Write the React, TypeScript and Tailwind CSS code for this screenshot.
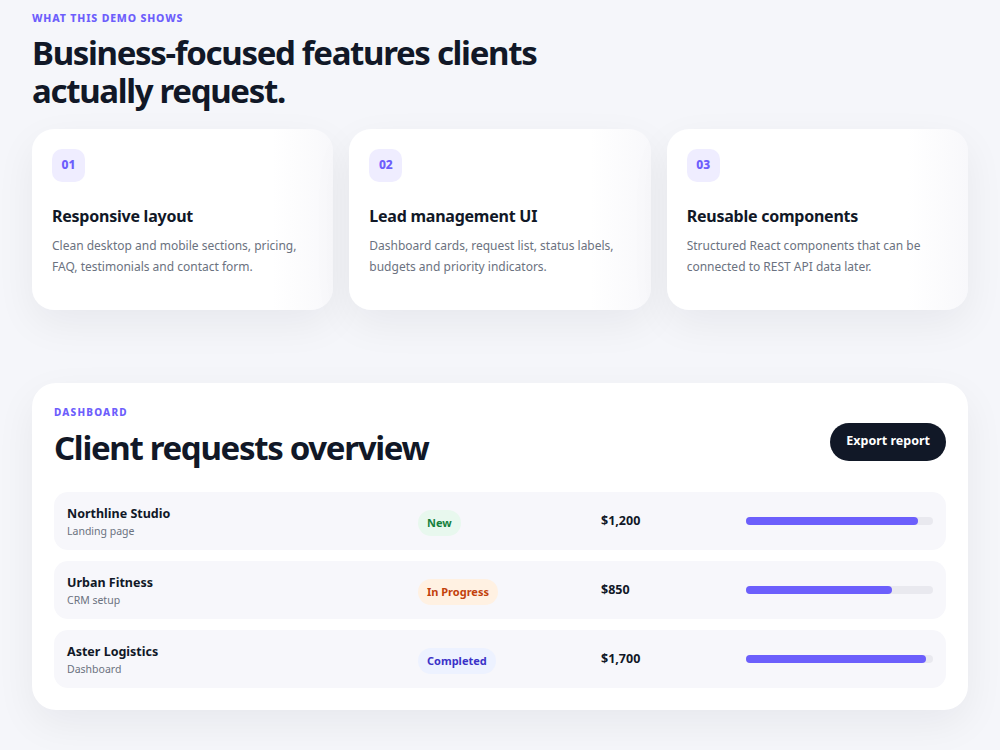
import React from "react"

const features = [
  {
    num: "01",
    title: "Responsive layout",
    text: "Clean desktop and mobile sections, pricing, FAQ, testimonials and contact form.",
  },
  {
    num: "02",
    title: "Lead management UI",
    text: "Dashboard cards, request list, status labels, budgets and priority indicators.",
  },
  {
    num: "03",
    title: "Reusable components",
    text: "Structured React components that can be connected to REST API data later.",
  },
]

const requests = [
  { name: "Northline Studio", type: "Landing page", status: "New", budget: "$1,200", progress: 92 },
  { name: "Urban Fitness", type: "CRM setup", status: "In Progress", budget: "$850", progress: 78 },
  { name: "Aster Logistics", type: "Dashboard", status: "Completed", budget: "$1,700", progress: 96 },
]

const statusStyles: Record<string, string> = {
  New: "bg-[#e8f8ee] text-[#15803d]",
  "In Progress": "bg-[#fff1e2] text-[#c2410c]",
  Completed: "bg-[#edf2ff] text-[#3b32c8]",
}

export default function App() {
  return (
    <div
      className="min-h-[750px] bg-[#f5f6fa] px-8 pt-[11px] pb-10 text-[#111827]"
      style={{ fontFamily: '"Noto Sans", "Open Sans", Arial, sans-serif' }}
    >
      {/* Features */}
      <p className="text-[10.5px] font-extrabold uppercase tracking-[0.08em] text-[#6d5efc]">What this demo shows</p>
      <h2 className="mt-[7px] text-[33px] font-bold leading-[38px] tracking-[-0.04em] text-[#111827]">
        Business-focused features clients
        <br />
        actually request.
      </h2>

      <div className="mt-[19px] grid grid-cols-3 gap-4">
        {features.map((f) => (
          <div
            key={f.num}
            className="h-[181px] rounded-[22px] bg-gradient-to-r from-white from-80% to-[#f8f8fb] p-5 shadow-[0_14px_40px_rgba(17,24,39,0.06)]"
          >
            <div className="flex h-[33px] w-[33px] items-center justify-center rounded-[10px] bg-[#efedff] text-[12px] font-extrabold text-[#6d5efc]">
              {f.num}
            </div>
            <h3 className="mt-[23px] text-[16px] font-bold leading-[22px] tracking-[-0.015em]">{f.title}</h3>
            <p className="mt-[8px] text-[12px] leading-[21px] text-[#6b7280]">{f.text}</p>
          </div>
        ))}
      </div>

      {/* Dashboard */}
      <div className="mt-[73px] rounded-[24px] bg-white px-[22px] pt-[22px] pb-[22px] shadow-[0_14px_40px_rgba(17,24,39,0.06)]">
        <div className="flex items-start justify-between">
          <div>
            <p className="text-[10px] font-extrabold uppercase tracking-[0.12em] text-[#6d5efc]">Dashboard</p>
            <h2 className="mt-[6px] text-[33px] font-bold leading-[44px] tracking-[-0.04em]">Client requests overview</h2>
          </div>
          <button className="mt-[18px] h-[38px] rounded-full bg-[#111827] px-4 text-[12.5px] font-bold text-white">
            Export report
          </button>
        </div>

        <div className="mt-[22px] flex flex-col gap-[11px]">
          {requests.map((r) => (
            <div
              key={r.name}
              className="grid h-[58px] grid-cols-[335px_167px_129px_1fr] items-center gap-4 rounded-[14px] bg-[#f7f7fb] px-[13px]"
            >
              <div className="pt-[2px]">
                <p className="text-[12.5px] font-bold leading-[19px]">{r.name}</p>
                <p className="text-[10.5px] leading-[17px] text-[#6b7280]">{r.type}</p>
              </div>
              <div className="pt-[3px]">
                <span
                  className={`inline-flex h-[26px] items-center rounded-full px-[9px] text-[11px] font-bold ${statusStyles[r.status]}`}
                >
                  {r.status}
                </span>
              </div>
              <p className="pt-[2px] text-[12.5px] font-bold">{r.budget}</p>
              <div className="h-2 w-full rounded-full bg-[#e9e9ef]">
                <div className="h-2 rounded-full bg-[#6c5ffc]" style={{ width: `${r.progress}%` }} />
              </div>
            </div>
          ))}
        </div>
      </div>
    </div>
  )
}
